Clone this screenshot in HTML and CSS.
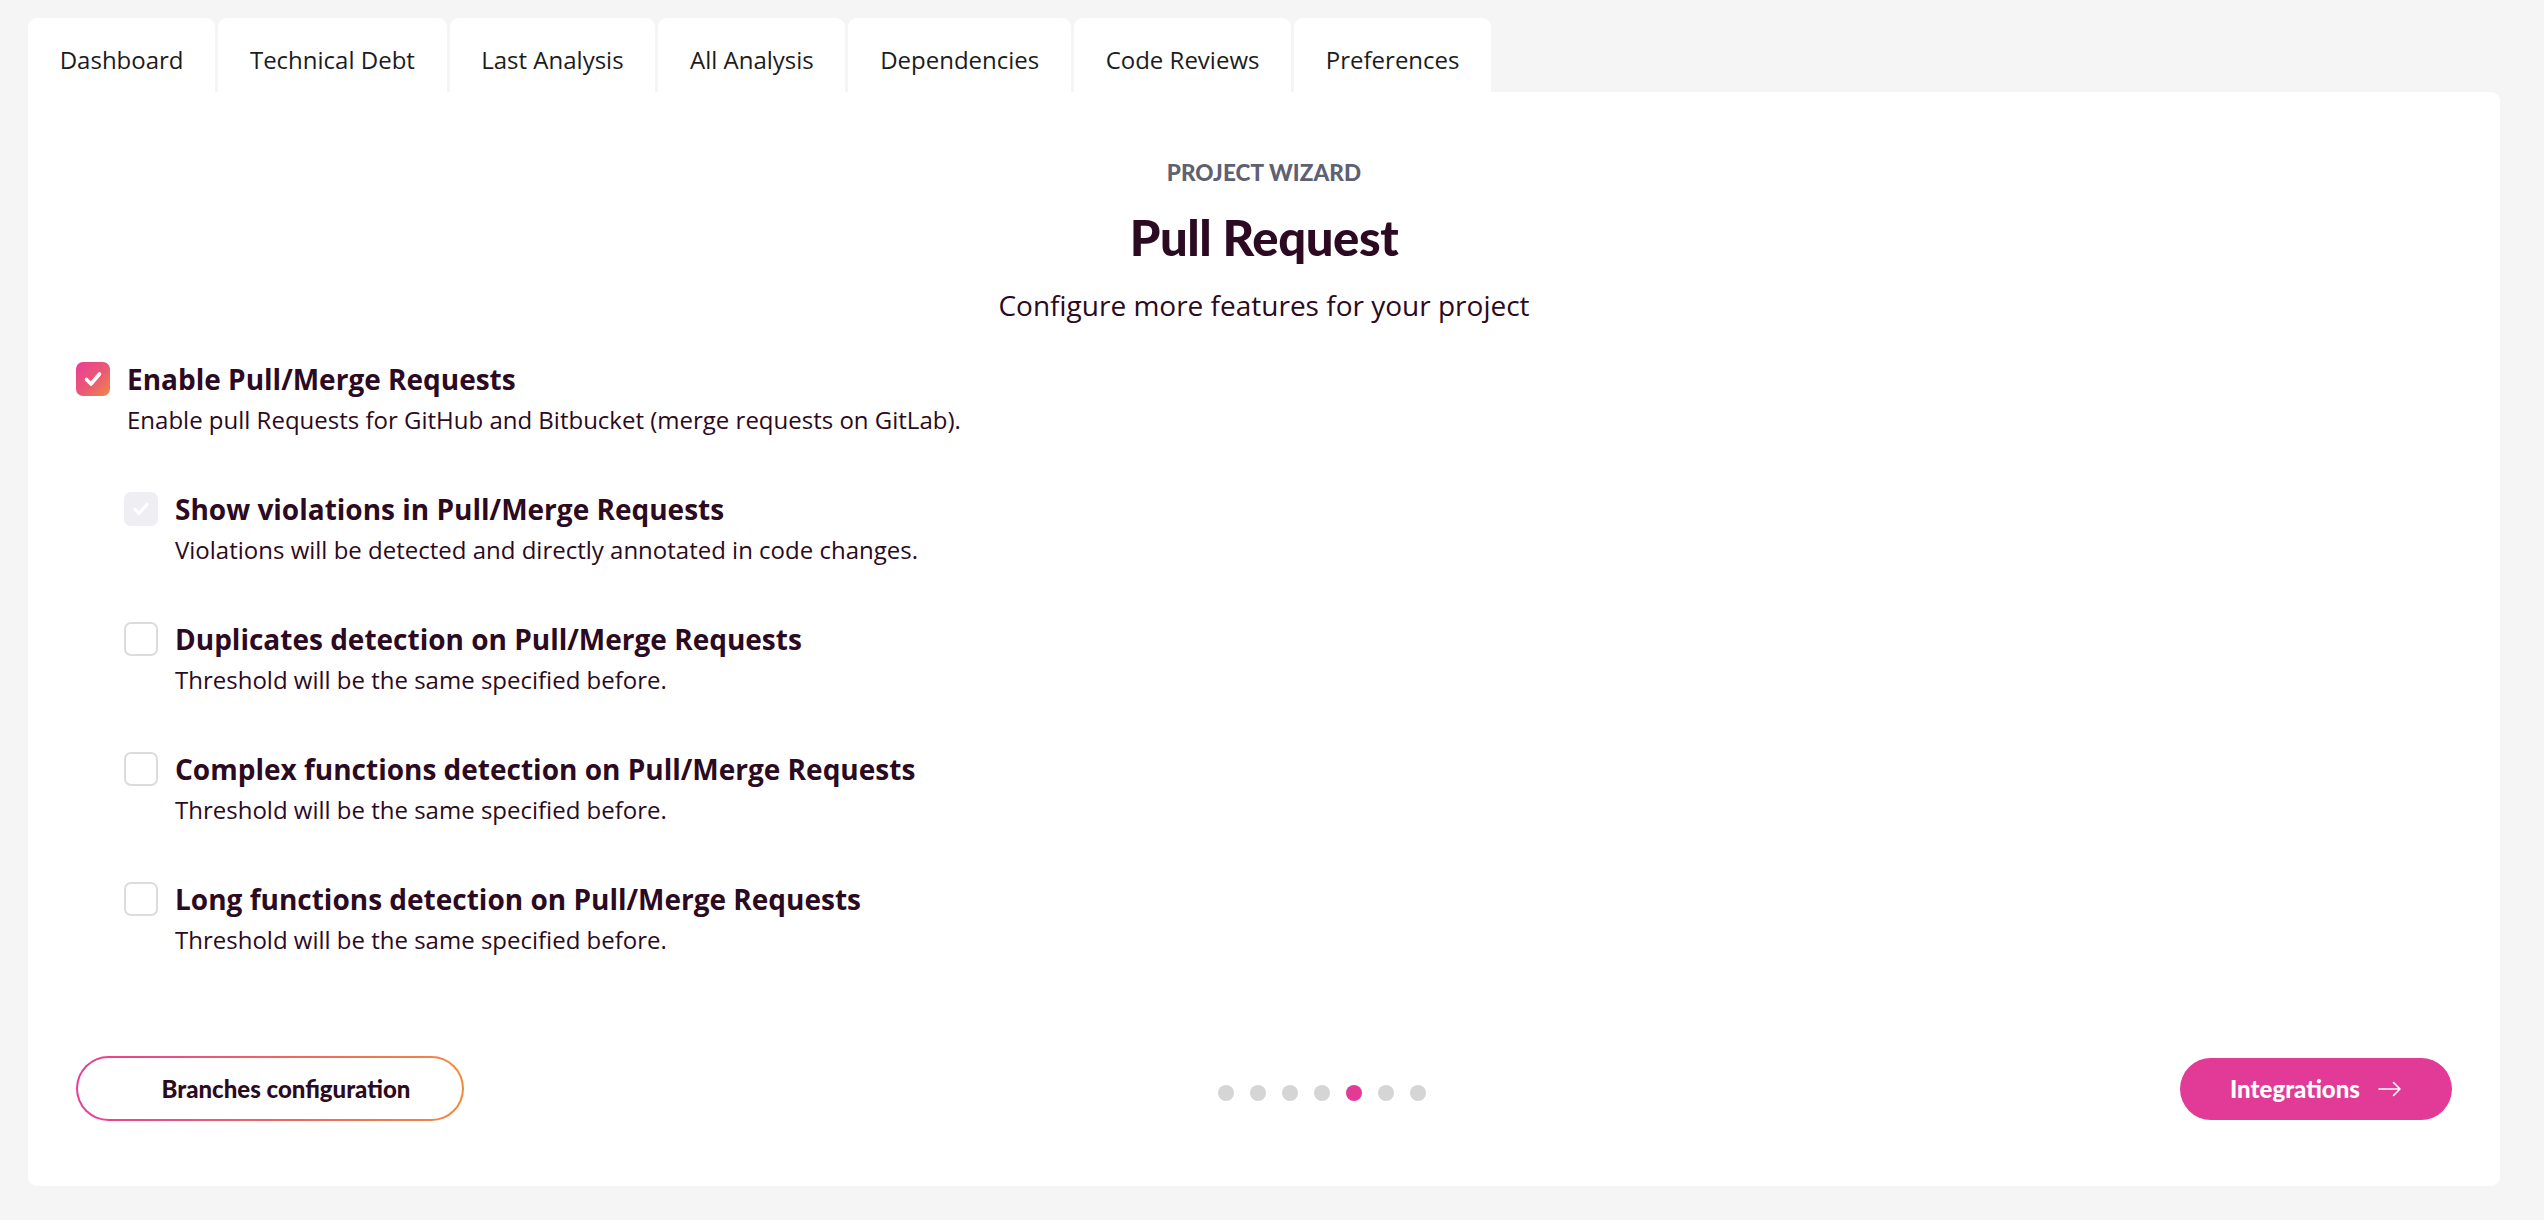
FILE: index.html
```html
<!DOCTYPE html>
<html lang="en">
<head>
<meta charset="utf-8">
<title>Project Wizard - Pull Request</title>
<link rel="stylesheet" href="styles.css">
</head>
<body>
<div class="page">
  <nav class="tabs">
    <div class="tab">Dashboard</div>
    <div class="tab">Technical Debt</div>
    <div class="tab">Last Analysis</div>
    <div class="tab">All Analysis</div>
    <div class="tab">Dependencies</div>
    <div class="tab">Code Reviews</div>
    <div class="tab">Preferences</div>
  </nav>
  <main class="card">
    <header class="head">
      <div class="eyebrow">PROJECT WIZARD</div>
      <h1 class="title">Pull Request</h1>
      <p class="subtitle">Configure more features for your project</p>
    </header>

    <section class="options">
      <div class="option">
        <span class="box box-on">
          <svg viewBox="0 0 34 34" width="34" height="34"><path d="M10.5 17.5 L15 22 L23.5 12" fill="none" stroke="#fff" stroke-width="3.6" stroke-linecap="round" stroke-linejoin="round"/></svg>
        </span>
        <div class="text">
          <div class="label">Enable Pull/Merge Requests</div>
          <div class="desc">Enable pull Requests for GitHub and Bitbucket (merge requests on GitLab).</div>
        </div>
      </div>

      <div class="sub">
        <div class="option">
          <span class="box box-disabled">
            <svg viewBox="0 0 34 34" width="34" height="34"><path d="M11 17.5 L15 21.5 L23 12.5" fill="none" stroke="#fff" stroke-width="3.2" stroke-linecap="round" stroke-linejoin="round"/></svg>
          </span>
          <div class="text">
            <div class="label">Show violations in Pull/Merge Requests</div>
            <div class="desc">Violations will be detected and directly annotated in code changes.</div>
          </div>
        </div>
        <div class="option">
          <span class="box box-off"></span>
          <div class="text">
            <div class="label">Duplicates detection on Pull/Merge Requests</div>
            <div class="desc">Threshold will be the same specified before.</div>
          </div>
        </div>
        <div class="option">
          <span class="box box-off"></span>
          <div class="text">
            <div class="label">Complex functions detection on Pull/Merge Requests</div>
            <div class="desc">Threshold will be the same specified before.</div>
          </div>
        </div>
        <div class="option">
          <span class="box box-off"></span>
          <div class="text">
            <div class="label">Long functions detection on Pull/Merge Requests</div>
            <div class="desc">Threshold will be the same specified before.</div>
          </div>
        </div>
      </div>
    </section>

    <footer class="footer">
      <button class="btn-outline"><span>Branches configuration</span></button>
      <div class="dots">
        <span class="dot"></span><span class="dot"></span><span class="dot"></span><span class="dot"></span><span class="dot dot-active"></span><span class="dot"></span><span class="dot"></span>
      </div>
      <button class="btn-primary">
        <span>Integrations</span>
        <svg viewBox="0 0 24 16" width="24" height="16"><path d="M1 8 H22 M15.5 1.5 L22 8 L15.5 14.5" fill="none" stroke="#fff" stroke-width="1.6" stroke-linecap="round" stroke-linejoin="round"/></svg>
      </button>
    </footer>
  </main>
</div>
</body>
</html>
```

FILE: styles.css
```css
* { box-sizing: border-box; }

html, body {
  margin: 0;
  padding: 0;
  background: #f5f5f5;
}

body {
  font-family: "Open Sans", "Noto Sans", sans-serif;
  color: #2b0a22;
}

.page {
  padding: 18px 44px 0 28px;
}

.tabs {
  display: flex;
  gap: 3px;
}

.tab {
  height: 74px;
  padding: 9px 31.7px 0;
  display: flex;
  align-items: center;
  background: #fff;
  border-radius: 9px 9px 0 0;
  font-size: 24px;
  color: #1c1c1c;
}

.card {
  background: #fff;
  border-radius: 0 9px 9px 9px;
  height: 1094px;
  padding: 66px 48px 0 48px;
  display: flex;
  flex-direction: column;
}

.head {
  text-align: center;
}

.eyebrow {
  font-family: "Lato", "Open Sans", sans-serif;
  font-weight: 900;
  font-size: 22.5px;
  line-height: 30px;
  color: #5f6173;
  letter-spacing: 0.1px;
}

.title {
  margin: 19px 0 0;
  font-family: "Lato", "Open Sans", sans-serif;
  font-weight: 900;
  font-size: 49px;
  line-height: 60px;
  color: #2b0a22;
  letter-spacing: -0.4px;
}

.subtitle {
  margin: 18px 0 0;
  font-size: 28px;
  line-height: 40px;
  color: #2b0a22;
}

.options {
  margin-top: 34px;
  display: flex;
  flex-direction: column;
  gap: 52px;
}

.sub {
  margin-left: 48px;
  display: flex;
  flex-direction: column;
  gap: 52px;
}

.option {
  display: flex;
  align-items: flex-start;
  gap: 17px;
}

.box {
  flex: 0 0 34px;
  width: 34px;
  height: 34px;
  margin-top: 3px;
  border-radius: 7px;
  display: block;
}

.box svg { display: block; }

.box-on {
  background: linear-gradient(135deg, #e83e95 0%, #ea5a74 55%, #f08a45 100%);
}

.box-disabled {
  background: #eeeef3;
}

.box-off {
  background: #fff;
  border: 2px solid #dcdcdf;
}

.label {
  font-weight: 700;
  font-size: 28px;
  line-height: 40px;
  color: #2b0a22;
}

.desc {
  margin-top: 4px;
  font-size: 24px;
  line-height: 34px;
  color: #2b0a22;
}

.footer {
  margin-top: auto;
  margin-bottom: 65px;
  display: flex;
  align-items: center;
  justify-content: space-between;
}

.btn-outline {
  width: 388px;
  height: 65px;
  border-radius: 33px;
  border: 2px solid transparent;
  background:
    linear-gradient(#fff, #fff) padding-box,
    linear-gradient(90deg, #e83e95 0%, #f08a3c 100%) border-box;
  padding: 0 0 0 32px;
  font-family: "Lato", "Open Sans", sans-serif;
  font-weight: 900;
  font-size: 24px;
  color: #2b0a22;
  display: flex;
  align-items: center;
  justify-content: center;
  cursor: pointer;
}

.dots {
  display: flex;
  gap: 16px;
  margin-top: 8px;
}

.dot {
  width: 16px;
  height: 16px;
  border-radius: 50%;
  background: #d5d5d5;
}

.dot-active {
  background: #e23b97;
}

.btn-primary {
  width: 272px;
  height: 62px;
  border-radius: 31px;
  border: none;
  background: #e23b97;
  color: #fff;
  font-family: "Lato", "Open Sans", sans-serif;
  font-weight: 900;
  font-size: 24px;
  display: flex;
  align-items: center;
  justify-content: center;
  gap: 18px;
  cursor: pointer;
}

.btn-primary svg { display: block; }
```
